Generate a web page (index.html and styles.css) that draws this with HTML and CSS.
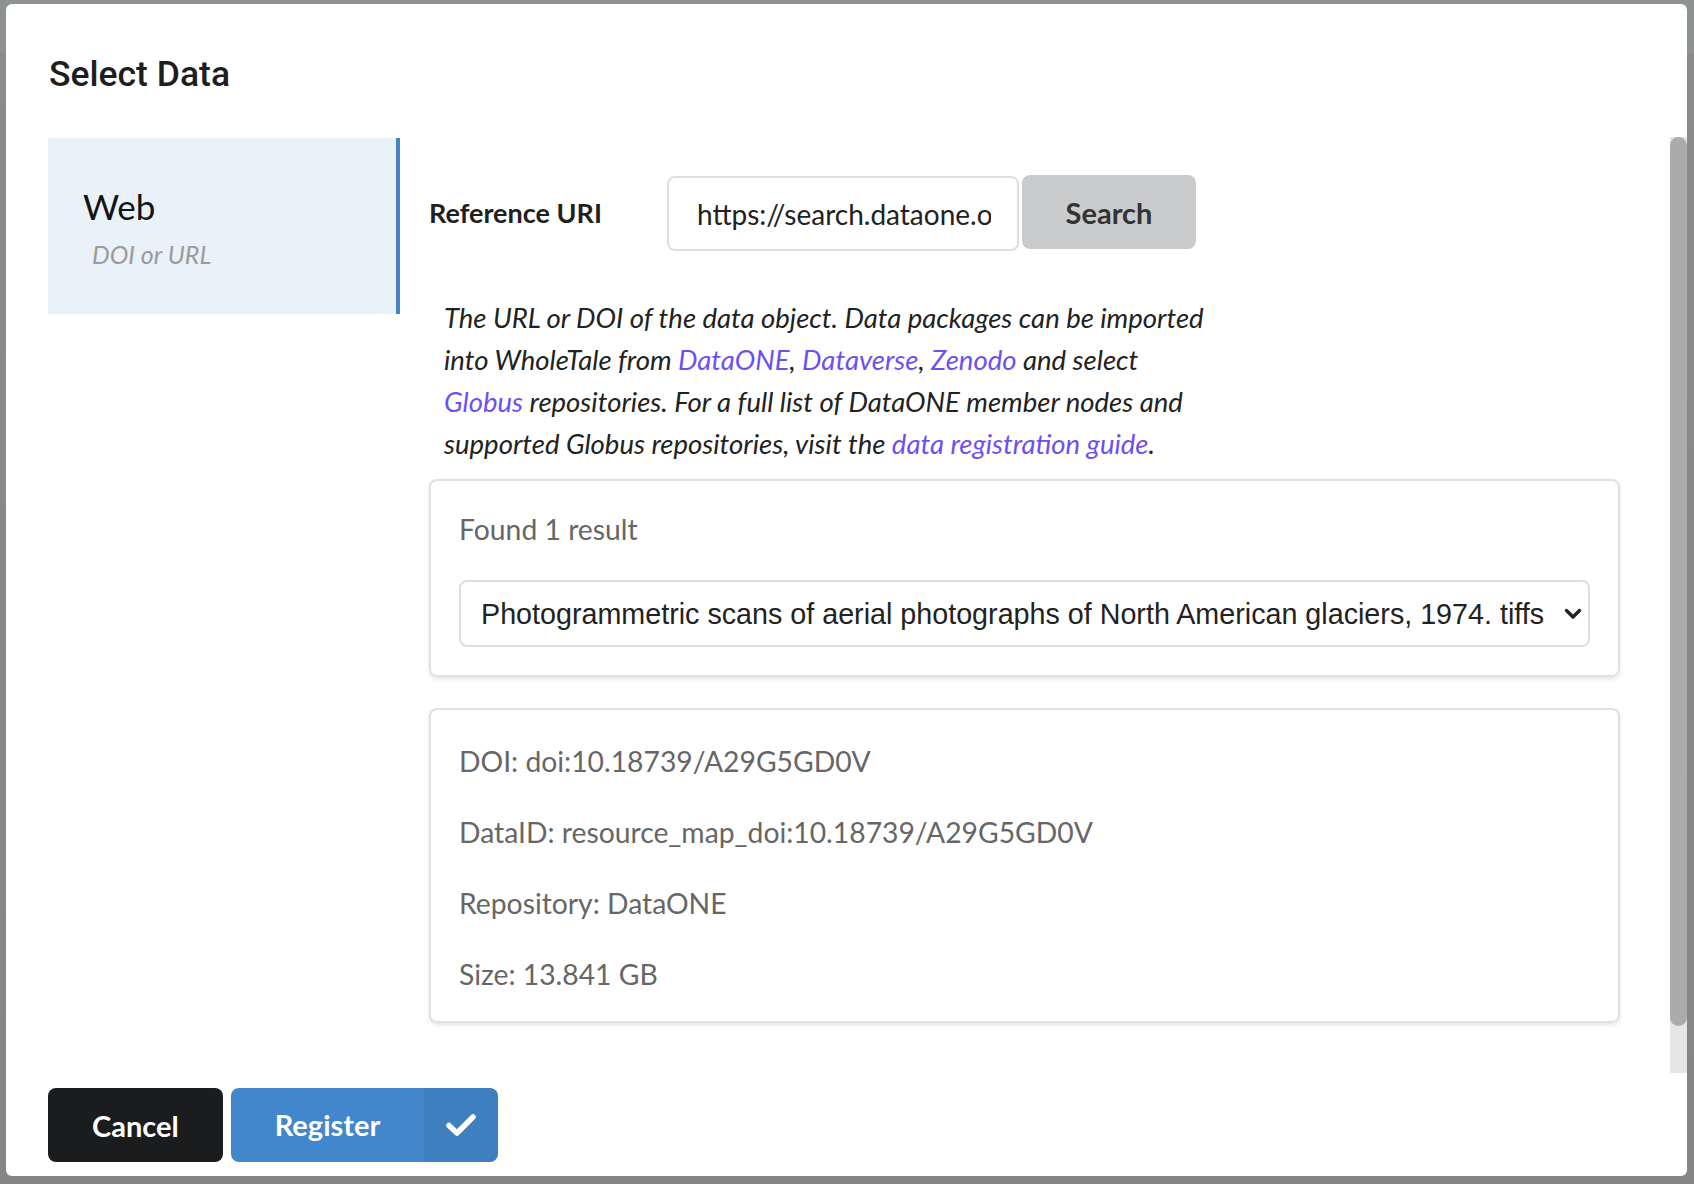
FILE: index.html
```html
<!DOCTYPE html>
<html lang="en">
<head>
<meta charset="utf-8">
<title>Select Data</title>
<link rel="stylesheet" href="styles.css">
</head>
<body>
<div class="modal">
  <div class="modal-header">Select Data</div>
  <div class="modal-main">
    <div class="modal-body">
      <div class="tabs">
        <div class="tab active">
          <div class="tab-title">Web</div>
          <div class="tab-sub">DOI or URL</div>
        </div>
      </div>
      <div class="pane">
        <div class="form-row">
          <label class="field-label">Reference URI</label>
          <div class="action-input">
            <input type="text" value="https://search.dataone.org/view/doi:10.18739/A29G5GD0V">
            <button class="btn btn-search">Search</button>
          </div>
        </div>
        <p class="help">The URL or DOI of the data object. Data packages can be imported<br>into WholeTale from <a href="#">DataONE</a>, <a href="#">Dataverse</a>, <a href="#">Zenodo</a> and select<br><a href="#">Globus</a> repositories. For a full list of DataONE member nodes and<br>supported Globus repositories, visit the <a href="#">data registration guide</a>.</p>
        <div class="segment results">
          <div class="found">Found 1 result</div>
          <div class="select-wrap">
            <select class="result-select">
              <option>Photogrammetric scans of aerial photographs of North American glaciers, 1974. tiffs</option>
            </select>
            <svg class="chev" width="18" height="12" viewBox="0 0 18 12"><path d="M2.5 2.5 L9 9 L15.5 2.5" fill="none" stroke="#222" stroke-width="3.4" stroke-linecap="round" stroke-linejoin="round"/></svg>
          </div>
        </div>
        <div class="segment details">
          <p>DOI: doi:10.18739/A29G5GD0V</p>
          <p>DataID: resource_map_doi:10.18739/A29G5GD0V</p>
          <p>Repository: DataONE</p>
          <p>Size: 13.841 GB</p>
        </div>
      </div>
    </div>
    <div class="scrollbar"><div class="scroll-thumb"></div></div>
  </div>
  <div class="modal-footer">
    <button class="btn btn-cancel">Cancel</button>
    <button class="btn btn-register"><span class="btn-label">Register</span><span class="btn-icon"><svg width="30" height="24" viewBox="0 0 30 24"><path d="M3 12.5 L11 20 L27 4" fill="none" stroke="#fff" stroke-width="5.5" stroke-linecap="round" stroke-linejoin="round"/></svg></span></button>
  </div>
</div>
</body>
</html>
```

FILE: styles.css
```css
* { box-sizing: border-box; }

html, body {
  margin: 0;
  height: 1184px;
  overflow: hidden;
}

body {
  background: linear-gradient(#8f9293 0, #8f9293 53px, #8a8b8c 53px, #848586 100%);
  font-family: Lato, "Open Sans", sans-serif;
  color: #222;
}

.modal {
  margin: 4px 0 0 6px;
  width: 1681px;
  height: 1172px;
  background: #fff;
  border-radius: 6px;
  display: flex;
  flex-direction: column;
  overflow: hidden;
}

.modal-header {
  flex: none;
  height: 133px;
  padding: 53px 0 0 43px;
  font-family: Roboto, "Liberation Sans", sans-serif;
  font-weight: 500;
  font-size: 35.5px;
  line-height: 1;
  color: #1e1e1e;
}

.modal-main {
  flex: none;
  height: 936px;
  display: flex;
}

.modal-body {
  flex: 1;
  min-width: 0;
  overflow: hidden;
  display: flex;
  align-items: flex-start;
  padding: 1px 0 0 42px;
}

.scrollbar {
  flex: none;
  width: 17px;
  background: #e6e6e6;
}

.scroll-thumb {
  height: 889px;
  background: #ababab;
  border-radius: 9px;
}

.tabs {
  flex: none;
  width: 352px;
}

.tab {
  height: 176px;
  background: #e9f1f9;
  border-right: 4px solid #4684c8;
  padding: 47px 0 0 35px;
}

.tab-title {
  font-size: 35px;
  line-height: 1.2;
  color: #141414;
}

.tab-sub {
  margin: 12px 0 0 9px;
  font-size: 25px;
  line-height: 1.2;
  font-style: italic;
  color: #9b9b9b;
}

.pane {
  flex: 1;
  min-width: 0;
  margin: 0 50px 0 29px;
  padding: 36px 0 100px;
}

.form-row {
  display: flex;
  align-items: center;
  height: 76px;
}

.field-label {
  width: 238px;
  flex: none;
  font-weight: 700;
  font-size: 27px;
  color: #1f1f1f;
}

.action-input {
  display: flex;
  align-items: center;
}

.action-input input {
  width: 352px;
  height: 75px;
  margin-top: 3px;
  border: 2px solid #dedede;
  border-radius: 8px;
  padding: 0 26px 0 28px;
  font-family: Lato, sans-serif;
  font-size: 28px;
  color: #222;
  outline: none;
}

.btn {
  border: 0;
  cursor: pointer;
  font-family: Lato, sans-serif;
  font-weight: 700;
  font-size: 29px;
}

.btn-search {
  margin-left: 3px;
  width: 174px;
  height: 74px;
  background: #cacbcd;
  border-radius: 8px;
  color: #333;
}

.help {
  margin: 47px 0 0 15px;
  font-size: 27.5px;
  line-height: 42px;
  font-style: italic;
  color: #222;
  white-space: nowrap;
}

.help a {
  color: #6c50f2;
  text-decoration: none;
}

.segment {
  border: 2px solid #e1e1e1;
  border-radius: 8px;
  box-shadow: 0 2px 4px rgba(34, 36, 38, 0.12);
  padding: 28px;
}

.results { margin-top: 14px; }

.found {
  font-size: 28.3px;
  line-height: 40px;
  color: #666;
}

.select-wrap {
  position: relative;
  margin-top: 31px;
}

.result-select {
  display: block;
  width: 100%;
  height: 67px;
  -webkit-appearance: none;
  appearance: none;
  border: 2px solid #dedede;
  border-radius: 8px;
  background: #fff;
  padding: 0 44px 0 20px;
  font-family: "Liberation Sans", Arial, sans-serif;
  font-size: 28.7px;
  color: #222;
  outline: none;
}

.chev {
  position: absolute;
  right: 8px;
  top: 28px;
  pointer-events: none;
}

.details {
  margin-top: 31px;
  padding: 30px 28px 26px;
}

.details p {
  margin: 0 0 29px;
  font-size: 28.3px;
  line-height: 42px;
  color: #666;
}

.details p:last-child { margin-bottom: 0; }

.modal-footer {
  flex: none;
  display: flex;
  gap: 8px;
  padding: 15px 0 0 42px;
}

.btn-cancel {
  height: 74px;
  padding: 0 44px;
  background: #1b1c1d;
  color: #fff;
  border-radius: 8px;
}

.btn-register {
  display: flex;
  height: 74px;
  padding: 0;
  background: #4286cb;
  color: #fff;
  border-radius: 8px;
  overflow: hidden;
}

.btn-label {
  padding: 0 44px 0 44px;
  line-height: 74px;
}

.btn-icon {
  width: 74px;
  display: flex;
  align-items: center;
  justify-content: center;
  background: rgba(0, 0, 0, 0.05);
}
```
